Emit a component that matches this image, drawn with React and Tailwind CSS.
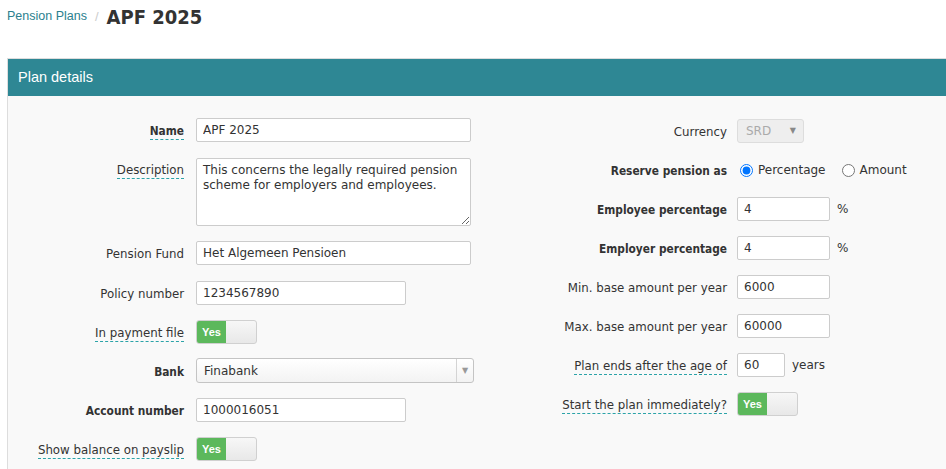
import React from 'react';

const FONT = { fontFamily: '"DejaVu Sans", Verdana, sans-serif' };
const BOLD = { fontFamily: '"DejaVu Sans Condensed", "DejaVu Sans", sans-serif' };

const Label = ({ children, bold, dashed }) => (
  <span
    className={`text-[11.8px] leading-[15px] text-[#333] ${bold ? 'font-bold' : ''} ${
      dashed ? 'border-b border-dashed border-[#2ba3a8]' : ''
    }`}
    style={bold ? BOLD : undefined}
  >
    {children}
  </span>
);

const TextInput = ({ value, width }) => (
  <input
    type="text"
    defaultValue={value}
    className={`block h-6 ${width} rounded-[2px] border border-[#cccccc] bg-white px-[6px] text-[12px] text-[#333] outline-none`}
  />
);

const Toggle = () => (
  <div className="flex h-6 w-[61px] overflow-hidden rounded-[3px] border border-[#d0d0d0] bg-gradient-to-b from-[#f7f7f7] to-[#e8e8e8]">
    <div
      className="flex w-[29px] items-center justify-center bg-[#5cb85c] text-[11px] font-bold text-white"
      style={{ fontFamily: '"Liberation Sans", Arial, sans-serif' }}
    >
      Yes
    </div>
    <div className="flex-1" />
  </div>
);

// ----------- left column row
const LRow = ({ label, bold, dashed, top, className = '', children }) => (
  <div className={`flex ${top ? 'items-start' : 'items-center'} ${className}`}>
    <div className={`flex w-[177px] shrink-0 justify-end pr-px ${top ? 'pt-[5px]' : 'pt-[3px]'}`}>
      <Label bold={bold} dashed={dashed}>{label}</Label>
    </div>
    <div className="ml-[11px] flex">{children}</div>
  </div>
);

// ----------- right column row
const RRow = ({ label, bold, dashed, children }) => (
  <div className="flex h-6 items-center">
    <div className="flex w-[246px] shrink-0 justify-end pt-[3px]">
      <Label bold={bold} dashed={dashed}>{label}</Label>
    </div>
    <div className="ml-[10px] flex items-center">{children}</div>
  </div>
);

const Unit = ({ children }) => <span className="ml-[7px] text-[12px] text-[#333]">{children}</span>;

export default function App() {
  return (
    <div className="h-[469px] overflow-hidden bg-white" style={FONT}>
      {/* breadcrumb */}
      <div className="flex h-[33px] items-center pl-[7px]">
        <span
          className="text-[12.5px] text-[#2b7f8e]"
          style={{ fontFamily: '"Liberation Sans", Arial, sans-serif' }}
        >
          Pension Plans
        </span>
        <span className="mx-[8px] text-[13px] text-[#cccccc]" style={{ fontFamily: '"Liberation Sans", Arial, sans-serif' }}>
          /
        </span>
        <span className="text-[20px] font-bold text-[#333]" style={BOLD}>
          APF 2025
        </span>
      </div>

      {/* panel */}
      <div className="ml-[7px] mt-[25px] border-l border-t border-[#dddddd]">
        <div
          className="flex h-[37px] items-center bg-[#2e8794] pl-[10px] text-[14.5px] text-white"
          style={{ fontFamily: '"Liberation Sans", Arial, sans-serif' }}
        >
          Plan details
        </div>

        <div className="flex h-[400px] bg-[#f9f9f9] pt-[22px]">
          {/* ---------- left */}
          <div className="w-[473px] shrink-0">
            <LRow label="Name" bold dashed>
              <TextInput value="APF 2025" width="w-[275px]" />
            </LRow>
            <LRow label="Description" dashed top className="mt-[16px]">
              <textarea
                defaultValue="This concerns the legally required pension scheme for employers and employees."
                className="block h-[68px] w-[275px] resize-y rounded-[2px] border border-[#cccccc] bg-white px-[6px] py-[4px] text-[12px] leading-[15px] text-[#333] outline-none"
              />
            </LRow>
            <LRow label="Pension Fund" className="mt-[15px]">
              <TextInput value="Het Algemeen Pensioen" width="w-[275px]" />
            </LRow>
            <LRow label="Policy number" className="mt-[16px]">
              <TextInput value="1234567890" width="w-[210px]" />
            </LRow>
            <LRow label="In payment file" dashed className="mt-[15px]">
              <Toggle />
            </LRow>
            <LRow label="Bank" bold className="mt-[14px]">
              <div className="flex h-[25px] w-[278px] rounded-[3px] border border-[#c4c4c4] bg-gradient-to-b from-white to-[#f3f3f3]">
                <div className="flex flex-1 items-center pl-[7px] text-[12px] text-[#333]">Finabank</div>
                <div className="flex w-[17px] items-center justify-center border-l border-[#d4d4d4] text-[8px] text-[#999]">
                  ▼
                </div>
              </div>
            </LRow>
            <LRow label="Account number" bold className="mt-[15px]">
              <TextInput value="1000016051" width="w-[210px]" />
            </LRow>
            <LRow label="Show balance on payslip" dashed className="mt-[15px]">
              <Toggle />
            </LRow>
          </div>

          {/* ---------- right */}
          <div className="flex flex-col gap-[15px] pt-px">
            <RRow label="Currency">
              <div className="flex h-6 w-[67px] items-center justify-between rounded-[3px] border border-[#dddddd] bg-[#eeeeee] pl-[8px] pr-[7px] text-[12px] text-[#aaaaaa]">
                <span>SRD</span>
                <span className="text-[8px] text-[#888]">▼</span>
              </div>
            </RRow>
            <RRow label="Reserve pension as" bold>
              <label className="flex items-center text-[12px] text-[#333]">
                <input type="radio" name="reserve" defaultChecked className="m-0 ml-[3px] h-[13px] w-[13px]" />
                <span className="ml-[5px]">Percentage</span>
              </label>
              <label className="ml-[16px] flex items-center text-[12px] text-[#333]">
                <input type="radio" name="reserve" className="m-0 h-[13px] w-[13px]" />
                <span className="ml-[5px]">Amount</span>
              </label>
            </RRow>
            <RRow label="Employee percentage" bold>
              <TextInput value="4" width="w-[93px]" />
              <Unit>%</Unit>
            </RRow>
            <RRow label="Employer percentage" bold>
              <TextInput value="4" width="w-[93px]" />
              <Unit>%</Unit>
            </RRow>
            <RRow label="Min. base amount per year">
              <TextInput value="6000" width="w-[93px]" />
            </RRow>
            <RRow label="Max. base amount per year">
              <TextInput value="60000" width="w-[93px]" />
            </RRow>
            <RRow label="Plan ends after the age of" dashed>
              <TextInput value="60" width="w-[48px]" />
              <Unit>years</Unit>
            </RRow>
            <RRow label="Start the plan immediately?" dashed>
              <Toggle />
            </RRow>
          </div>
        </div>
      </div>
    </div>
  );
}
